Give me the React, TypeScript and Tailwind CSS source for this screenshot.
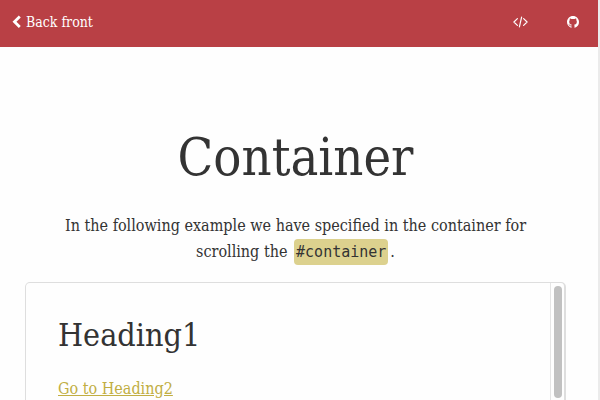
import React from "react";

function BackIcon() {
  return (
    <svg viewBox="0 0 9 14" className="h-[14px] w-[9px]" fill="none" stroke="currentColor" strokeWidth="2.8" aria-hidden="true">
      <path d="M7.8 1.6 2.5 6.8l5.3 5.2" />
    </svg>
  );
}

function CodeIcon() {
  return (
    <svg viewBox="0 0 15 12" className="h-3 w-[15px]" fill="none" stroke="currentColor" strokeWidth="1.2" strokeLinecap="round" strokeLinejoin="round" aria-hidden="true">
      <path d="M4.4 2.6.9 6l3.5 3.4M10.6 2.6 14.1 6l-3.5 3.4M8.6 1.1 6.4 10.9" />
    </svg>
  );
}

function GithubIcon() {
  return (
    <svg viewBox="0 0 16 16" className="size-3" fill="currentColor" aria-hidden="true">
      <path d="M8 0C3.58 0 0 3.58 0 8c0 3.54 2.29 6.53 5.47 7.59.4.07.55-.17.55-.38 0-.19-.01-.82-.01-1.49-2.01.37-2.53-.49-2.69-.94-.09-.23-.48-.94-.82-1.13-.28-.15-.68-.52-.01-.53.63-.01 1.08.58 1.23.82.72 1.21 1.87.87 2.33.66.07-.52.28-.87.51-1.07-1.78-.2-3.64-.89-3.64-3.95 0-.87.31-1.59.82-2.15-.08-.2-.36-1.02.08-2.12 0 0 .67-.21 2.2.82A7.6 7.6 0 0 1 8 3.86c.68 0 1.36.09 2 .27 1.53-1.04 2.2-.82 2.2-.82.44 1.1.16 1.92.08 2.12.51.56.82 1.27.82 2.15 0 3.07-1.87 3.75-3.65 3.95.29.25.54.73.54 1.48 0 1.07-.01 1.93-.01 2.2 0 .21.15.46.55.38A8 8 0 0 0 16 8c0-4.42-3.58-8-8-8z" />
    </svg>
  );
}

export default function App() {
  return (
    <div className="h-screen overflow-hidden border-r-2 border-[#ebebeb] bg-[#fefefe] font-['Roboto_Slab','DejaVu_Serif_Condensed','DejaVu_Serif',serif] text-[#333333]">
      <header className="flex h-[47px] items-center justify-between bg-[#b94045] pb-1 pl-3 pr-[19px] text-white">
        <a href="#front" className="flex items-center gap-[5px] text-sm">
          <BackIcon />
          Back front
        </a>
        <nav className="flex items-center gap-[39px]">
          <a href="#code" aria-label="Source code"><CodeIcon /></a>
          <a href="#github" aria-label="GitHub"><GithubIcon /></a>
        </nav>
      </header>
      <main className="pl-[25px] pr-8 pt-[74px]">
        <h1 className="text-center text-[52px] leading-[72px]">Container</h1>
        <p className="mx-5 mt-5 text-center text-base leading-[26px]">
          In the following example we have specified in the container for scrolling the{" "}
          <code className="mx-0.5 inline-block rounded bg-[#dcd18e] px-0.5 font-['DejaVu_Sans_Mono',monospace] text-[15px] leading-[26px]">#container</code>.
        </p>
        <section className="mt-[17px] flex h-80 overflow-hidden rounded-[5px] border border-r-2 border-[#dedede]">
          <div className="min-w-0 flex-1 px-8 pt-8">
            <h2 className="text-[32px] leading-10">Heading1</h2>
            <a href="#heading2" className="mt-[22px] inline-block text-base leading-6 text-[#c1ae43] underline">Go to Heading2</a>
          </div>
          <div className="w-[14px] border-l border-[#e5e5e5] px-[3px] pt-[3px]">
            <div className="h-28 w-2 rounded-full bg-[#c1c1c1]" />
          </div>
        </section>
      </main>
    </div>
  );
}
